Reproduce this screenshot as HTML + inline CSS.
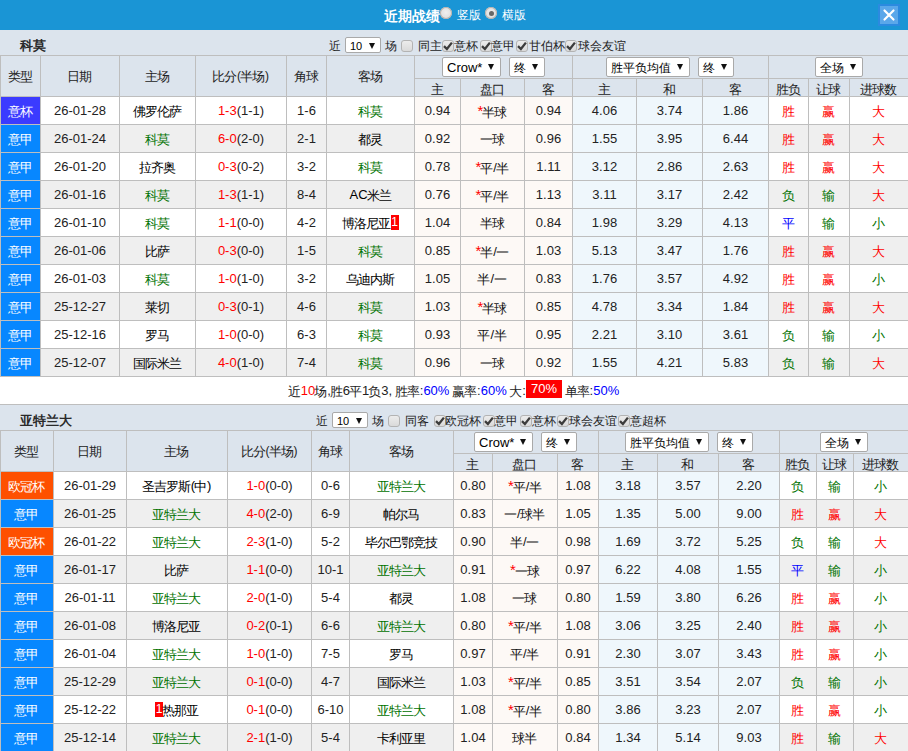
<!DOCTYPE html>
<html><head><meta charset="utf-8"><style>
html,body{margin:0;padding:0;}
body{width:908px;height:751px;overflow:hidden;position:relative;background:#fff;font-family:"Liberation Sans",sans-serif;font-size:12px;color:#222}
body div{position:absolute;}
i{font-style:normal;font-size:13px;letter-spacing:-1px;position:relative;left:-1px;top:1px}
.sel{background:#fff;border:1px solid #a9a9a9;border-radius:2px;box-sizing:border-box;color:#000}
.sel .tri{position:absolute;width:0;height:0;border-left:3px solid transparent;border-right:3px solid transparent;border-top:5px solid #111;}
.badge{display:inline-block;background:#f00;color:#fff;width:8px;height:15px;line-height:15px;text-align:center;font-size:12px;vertical-align:1px}
.ast{color:#f00;font-size:15px;vertical-align:0}
.sl{margin:0 0.5px 0 0}
.big{display:inline-block;background:#f00;color:#fff;padding:0 5px;height:18px;line-height:18px;font-size:13px;vertical-align:2px}
</style></head><body>
<div style="left:0;top:0;width:908px;height:30px;background:#1a95d5"></div>
<div style="left:384px;top:1px;height:30px;line-height:30px;font-size:14px;font-weight:bold;color:#fff;white-space:nowrap">近期战绩</div>
<div style="left:440px;top:7px;width:12px;height:12px;border-radius:50%;background:radial-gradient(circle at 50% 45%,#efefef,#d6d6d6);box-shadow:0 0 0 1px #b9b2ac inset"></div>
<div style="left:457px;top:0;height:31px;line-height:31px;font-size:12px;color:#fff;white-space:nowrap">竖版</div>
<div style="left:485px;top:7px;width:12px;height:12px;border-radius:50%;background:radial-gradient(circle at 50% 45%,#efefef,#d6d6d6);box-shadow:0 0 0 1px #b9b2ac inset"><div style="left:3.5px;top:3.5px;width:5px;height:5px;border-radius:50%;background:#676767"></div></div>
<div style="left:502px;top:0;height:31px;line-height:31px;font-size:12px;color:#fff;white-space:nowrap">横版</div>
<div style="left:878px;top:4px;width:22px;height:22px;box-sizing:border-box;border:2px solid #2b8ae0;background:#5aa7ea">
<svg width="18" height="18" viewBox="0 0 18 18" style="position:absolute;left:0;top:0"><path d="M4.5 4.5 L13.5 13.5 M13.5 4.5 L4.5 13.5" stroke="#fff" stroke-width="2.2" stroke-linecap="round"/></svg></div>
<div style="left:0px;top:30px;width:908px;height:66px;background:#dce4ed"></div>
<div style="left:20px;top:30px;width:80px;height:25px;font-weight:bold;font-size:13px;line-height:32px;color:#2a2a2a">科莫</div>
<div style="left:329px;top:33px;width:60px;height:25px;line-height:27px;white-space:nowrap;color:#222">近</div>
<div class="sel" style="left:345px;top:37px;width:36px;height:16px;font-size:11px"><span style="position:absolute;left:4px;top:0px;line-height:16px;white-space:nowrap">10</span><span class="tri" style="right:5px;top:5px;border-left-width:3px;border-right-width:3px;border-top-width:6px"></span></div>
<div style="left:385px;top:33px;width:60px;height:25px;line-height:27px;white-space:nowrap;color:#222">场</div>
<div style="left:401px;top:40px;width:12px;height:12px;box-sizing:border-box;border:1px solid #b3b3b3;border-radius:3px;background:linear-gradient(#ececec,#dadada);"></div>
<div style="left:418px;top:33px;width:60px;height:25px;line-height:27px;white-space:nowrap;color:#222">同主</div>
<div style="left:442px;top:40px;width:12px;height:12px;box-sizing:border-box;border:1px solid #b3b3b3;border-radius:3px;background:linear-gradient(#ececec,#dadada);"><svg width="12" height="12" viewBox="0 0 12 12" style="position:absolute;left:-1px;top:-1px"><path d="M2 6.2 L4.9 9 L9.9 2.6" stroke="#3c3c3c" stroke-width="2.3" fill="none" stroke-linecap="butt" stroke-linejoin="miter"/></svg></div>
<div style="left:454px;top:33px;width:60px;height:25px;line-height:27px;white-space:nowrap;color:#222">意杯</div>
<div style="left:480px;top:40px;width:12px;height:12px;box-sizing:border-box;border:1px solid #b3b3b3;border-radius:3px;background:linear-gradient(#ececec,#dadada);"><svg width="12" height="12" viewBox="0 0 12 12" style="position:absolute;left:-1px;top:-1px"><path d="M2 6.2 L4.9 9 L9.9 2.6" stroke="#3c3c3c" stroke-width="2.3" fill="none" stroke-linecap="butt" stroke-linejoin="miter"/></svg></div>
<div style="left:491px;top:33px;width:60px;height:25px;line-height:27px;white-space:nowrap;color:#222">意甲</div>
<div style="left:516px;top:40px;width:12px;height:12px;box-sizing:border-box;border:1px solid #b3b3b3;border-radius:3px;background:linear-gradient(#ececec,#dadada);"><svg width="12" height="12" viewBox="0 0 12 12" style="position:absolute;left:-1px;top:-1px"><path d="M2 6.2 L4.9 9 L9.9 2.6" stroke="#3c3c3c" stroke-width="2.3" fill="none" stroke-linecap="butt" stroke-linejoin="miter"/></svg></div>
<div style="left:529px;top:33px;width:60px;height:25px;line-height:27px;white-space:nowrap;color:#222">甘伯杯</div>
<div style="left:565px;top:40px;width:12px;height:12px;box-sizing:border-box;border:1px solid #b3b3b3;border-radius:3px;background:linear-gradient(#ececec,#dadada);"><svg width="12" height="12" viewBox="0 0 12 12" style="position:absolute;left:-1px;top:-1px"><path d="M2 6.2 L4.9 9 L9.9 2.6" stroke="#3c3c3c" stroke-width="2.3" fill="none" stroke-linecap="butt" stroke-linejoin="miter"/></svg></div>
<div style="left:578px;top:33px;width:60px;height:25px;line-height:27px;white-space:nowrap;color:#222">球会友谊</div>
<div style="left:1px;top:56px;width:39px;height:40px;line-height:40px;text-align:center;white-space:nowrap;color:#222"><i>类型</i></div>
<div style="left:41px;top:56px;width:78px;height:40px;line-height:40px;text-align:center;white-space:nowrap;color:#222"><i>日期</i></div>
<div style="left:120px;top:56px;width:75px;height:40px;line-height:40px;text-align:center;white-space:nowrap;color:#222"><i>主场</i></div>
<div style="left:196px;top:56px;width:90px;height:40px;line-height:40px;text-align:center;white-space:nowrap;color:#222"><i>比分</i>(<i>半场</i>)</div>
<div style="left:287px;top:56px;width:39px;height:40px;line-height:40px;text-align:center;white-space:nowrap;color:#222"><i>角球</i></div>
<div style="left:327px;top:56px;width:87px;height:40px;line-height:40px;text-align:center;white-space:nowrap;color:#222"><i>客场</i></div>
<div style="left:415px;top:80px;width:45px;height:17px;line-height:17px;text-align:center;white-space:nowrap;color:#222"><i>主</i></div>
<div style="left:461px;top:80px;width:63px;height:17px;line-height:17px;text-align:center;white-space:nowrap;color:#222"><i>盘口</i></div>
<div style="left:525px;top:80px;width:47px;height:17px;line-height:17px;text-align:center;white-space:nowrap;color:#222"><i>客</i></div>
<div style="left:573px;top:80px;width:63px;height:17px;line-height:17px;text-align:center;white-space:nowrap;color:#222"><i>主</i></div>
<div style="left:637px;top:80px;width:65px;height:17px;line-height:17px;text-align:center;white-space:nowrap;color:#222"><i>和</i></div>
<div style="left:703px;top:80px;width:65px;height:17px;line-height:17px;text-align:center;white-space:nowrap;color:#222"><i>客</i></div>
<div style="left:769px;top:80px;width:39px;height:17px;line-height:17px;text-align:center;white-space:nowrap;color:#222"><i>胜负</i></div>
<div style="left:809px;top:80px;width:40px;height:17px;line-height:17px;text-align:center;white-space:nowrap;color:#222"><i>让球</i></div>
<div style="left:850px;top:80px;width:58px;height:17px;line-height:17px;text-align:center;white-space:nowrap;color:#222"><i>进球数</i></div>
<div class="sel" style="left:442px;top:57px;width:59px;height:20px;font-size:13px"><span style="position:absolute;left:4px;top:0px;line-height:20px;white-space:nowrap">Crow*</span><span class="tri" style="right:6px;top:6px;border-left-width:3px;border-right-width:3px;border-top-width:6px"></span></div>
<div class="sel" style="left:509px;top:57px;width:36px;height:20px;font-size:12px"><span style="position:absolute;left:4px;top:0px;line-height:20px;white-space:nowrap">终</span><span class="tri" style="right:6px;top:6px;border-left-width:3px;border-right-width:3px;border-top-width:6px"></span></div>
<div class="sel" style="left:606px;top:57px;width:84px;height:20px;font-size:12px"><span style="position:absolute;left:4px;top:0px;line-height:20px;white-space:nowrap">胜平负均值</span><span class="tri" style="right:6px;top:6px;border-left-width:3px;border-right-width:3px;border-top-width:6px"></span></div>
<div class="sel" style="left:698px;top:57px;width:36px;height:20px;font-size:12px"><span style="position:absolute;left:4px;top:0px;line-height:20px;white-space:nowrap">终</span><span class="tri" style="right:6px;top:6px;border-left-width:3px;border-right-width:3px;border-top-width:6px"></span></div>
<div class="sel" style="left:815px;top:57px;width:48px;height:20px;font-size:12px"><span style="position:absolute;left:4px;top:0px;line-height:20px;white-space:nowrap">全场</span><span class="tri" style="right:6px;top:6px;border-left-width:3px;border-right-width:3px;border-top-width:6px"></span></div>
<div style="left:0px;top:96px;width:908px;height:28px;background:#fff"></div>
<div style="left:414px;top:96px;width:158px;height:28px;background:#fdf9f6"></div>
<div style="left:572px;top:96px;width:196px;height:28px;background:#eff7fc"></div>
<div style="left:1px;top:97px;width:39px;height:27px;background:#3b3bff"></div>
<div style="left:1px;top:97px;width:39px;height:27px;line-height:27px;text-align:center;white-space:nowrap;font-size:13px;color:#fff"><i>意杯</i></div>
<div style="left:41px;top:97px;width:78px;height:27px;line-height:27px;text-align:center;white-space:nowrap;font-size:13px;color:#222">26-01-28</div>
<div style="left:120px;top:97px;width:75px;height:27px;line-height:27px;text-align:center;white-space:nowrap;font-size:13px;color:#000"><i>佛罗伦萨</i></div>
<div style="left:196px;top:97px;width:90px;height:27px;line-height:27px;text-align:center;white-space:nowrap;font-size:13px;color:#222"><span style="color:#ff0000">1-3</span>(1-1)</div>
<div style="left:287px;top:97px;width:39px;height:27px;line-height:27px;text-align:center;white-space:nowrap;font-size:13px;color:#222">1-6</div>
<div style="left:327px;top:97px;width:87px;height:27px;line-height:27px;text-align:center;white-space:nowrap;font-size:13px;color:#007200"><i>科莫</i></div>
<div style="left:415px;top:97px;width:45px;height:27px;line-height:27px;text-align:center;white-space:nowrap;font-size:13px;color:#222">0.94</div>
<div style="left:461px;top:97px;width:63px;height:27px;line-height:27px;text-align:center;white-space:nowrap;font-size:13px;color:#111"><span class="ast">*</span><i>半球</i></div>
<div style="left:525px;top:97px;width:47px;height:27px;line-height:27px;text-align:center;white-space:nowrap;font-size:13px;color:#222">0.94</div>
<div style="left:573px;top:97px;width:63px;height:27px;line-height:27px;text-align:center;white-space:nowrap;font-size:13px;color:#222">4.06</div>
<div style="left:637px;top:97px;width:65px;height:27px;line-height:27px;text-align:center;white-space:nowrap;font-size:13px;color:#222">3.74</div>
<div style="left:703px;top:97px;width:65px;height:27px;line-height:27px;text-align:center;white-space:nowrap;font-size:13px;color:#222">1.86</div>
<div style="left:769px;top:97px;width:39px;height:27px;line-height:27px;text-align:center;white-space:nowrap;font-size:13px;color:#ff0000"><i>胜</i></div>
<div style="left:809px;top:97px;width:40px;height:27px;line-height:27px;text-align:center;white-space:nowrap;font-size:13px;color:#ff0000"><i>赢</i></div>
<div style="left:850px;top:97px;width:58px;height:27px;line-height:27px;text-align:center;white-space:nowrap;font-size:13px;color:#ff0000"><i>大</i></div>
<div style="left:0px;top:124px;width:908px;height:28px;background:#efefef"></div>
<div style="left:414px;top:124px;width:158px;height:28px;background:#fdf9f6"></div>
<div style="left:572px;top:124px;width:196px;height:28px;background:#eff7fc"></div>
<div style="left:1px;top:125px;width:39px;height:27px;background:#0787ff"></div>
<div style="left:1px;top:125px;width:39px;height:27px;line-height:27px;text-align:center;white-space:nowrap;font-size:13px;color:#fff"><i>意甲</i></div>
<div style="left:41px;top:125px;width:78px;height:27px;line-height:27px;text-align:center;white-space:nowrap;font-size:13px;color:#222">26-01-24</div>
<div style="left:120px;top:125px;width:75px;height:27px;line-height:27px;text-align:center;white-space:nowrap;font-size:13px;color:#007200"><i>科莫</i></div>
<div style="left:196px;top:125px;width:90px;height:27px;line-height:27px;text-align:center;white-space:nowrap;font-size:13px;color:#222"><span style="color:#ff0000">6-0</span>(2-0)</div>
<div style="left:287px;top:125px;width:39px;height:27px;line-height:27px;text-align:center;white-space:nowrap;font-size:13px;color:#222">2-1</div>
<div style="left:327px;top:125px;width:87px;height:27px;line-height:27px;text-align:center;white-space:nowrap;font-size:13px;color:#000"><i>都灵</i></div>
<div style="left:415px;top:125px;width:45px;height:27px;line-height:27px;text-align:center;white-space:nowrap;font-size:13px;color:#222">0.92</div>
<div style="left:461px;top:125px;width:63px;height:27px;line-height:27px;text-align:center;white-space:nowrap;font-size:13px;color:#111"><i>一球</i></div>
<div style="left:525px;top:125px;width:47px;height:27px;line-height:27px;text-align:center;white-space:nowrap;font-size:13px;color:#222">0.96</div>
<div style="left:573px;top:125px;width:63px;height:27px;line-height:27px;text-align:center;white-space:nowrap;font-size:13px;color:#222">1.55</div>
<div style="left:637px;top:125px;width:65px;height:27px;line-height:27px;text-align:center;white-space:nowrap;font-size:13px;color:#222">3.95</div>
<div style="left:703px;top:125px;width:65px;height:27px;line-height:27px;text-align:center;white-space:nowrap;font-size:13px;color:#222">6.44</div>
<div style="left:769px;top:125px;width:39px;height:27px;line-height:27px;text-align:center;white-space:nowrap;font-size:13px;color:#ff0000"><i>胜</i></div>
<div style="left:809px;top:125px;width:40px;height:27px;line-height:27px;text-align:center;white-space:nowrap;font-size:13px;color:#ff0000"><i>赢</i></div>
<div style="left:850px;top:125px;width:58px;height:27px;line-height:27px;text-align:center;white-space:nowrap;font-size:13px;color:#ff0000"><i>大</i></div>
<div style="left:0px;top:152px;width:908px;height:28px;background:#fff"></div>
<div style="left:414px;top:152px;width:158px;height:28px;background:#fdf9f6"></div>
<div style="left:572px;top:152px;width:196px;height:28px;background:#eff7fc"></div>
<div style="left:1px;top:153px;width:39px;height:27px;background:#0787ff"></div>
<div style="left:1px;top:153px;width:39px;height:27px;line-height:27px;text-align:center;white-space:nowrap;font-size:13px;color:#fff"><i>意甲</i></div>
<div style="left:41px;top:153px;width:78px;height:27px;line-height:27px;text-align:center;white-space:nowrap;font-size:13px;color:#222">26-01-20</div>
<div style="left:120px;top:153px;width:75px;height:27px;line-height:27px;text-align:center;white-space:nowrap;font-size:13px;color:#000"><i>拉齐奥</i></div>
<div style="left:196px;top:153px;width:90px;height:27px;line-height:27px;text-align:center;white-space:nowrap;font-size:13px;color:#222"><span style="color:#ff0000">0-3</span>(0-2)</div>
<div style="left:287px;top:153px;width:39px;height:27px;line-height:27px;text-align:center;white-space:nowrap;font-size:13px;color:#222">3-2</div>
<div style="left:327px;top:153px;width:87px;height:27px;line-height:27px;text-align:center;white-space:nowrap;font-size:13px;color:#007200"><i>科莫</i></div>
<div style="left:415px;top:153px;width:45px;height:27px;line-height:27px;text-align:center;white-space:nowrap;font-size:13px;color:#222">0.78</div>
<div style="left:461px;top:153px;width:63px;height:27px;line-height:27px;text-align:center;white-space:nowrap;font-size:13px;color:#111"><span class="ast">*</span><i>平</i><span class="sl">/</span><i>半</i></div>
<div style="left:525px;top:153px;width:47px;height:27px;line-height:27px;text-align:center;white-space:nowrap;font-size:13px;color:#222">1.11</div>
<div style="left:573px;top:153px;width:63px;height:27px;line-height:27px;text-align:center;white-space:nowrap;font-size:13px;color:#222">3.12</div>
<div style="left:637px;top:153px;width:65px;height:27px;line-height:27px;text-align:center;white-space:nowrap;font-size:13px;color:#222">2.86</div>
<div style="left:703px;top:153px;width:65px;height:27px;line-height:27px;text-align:center;white-space:nowrap;font-size:13px;color:#222">2.63</div>
<div style="left:769px;top:153px;width:39px;height:27px;line-height:27px;text-align:center;white-space:nowrap;font-size:13px;color:#ff0000"><i>胜</i></div>
<div style="left:809px;top:153px;width:40px;height:27px;line-height:27px;text-align:center;white-space:nowrap;font-size:13px;color:#ff0000"><i>赢</i></div>
<div style="left:850px;top:153px;width:58px;height:27px;line-height:27px;text-align:center;white-space:nowrap;font-size:13px;color:#ff0000"><i>大</i></div>
<div style="left:0px;top:180px;width:908px;height:28px;background:#efefef"></div>
<div style="left:414px;top:180px;width:158px;height:28px;background:#fdf9f6"></div>
<div style="left:572px;top:180px;width:196px;height:28px;background:#eff7fc"></div>
<div style="left:1px;top:181px;width:39px;height:27px;background:#0787ff"></div>
<div style="left:1px;top:181px;width:39px;height:27px;line-height:27px;text-align:center;white-space:nowrap;font-size:13px;color:#fff"><i>意甲</i></div>
<div style="left:41px;top:181px;width:78px;height:27px;line-height:27px;text-align:center;white-space:nowrap;font-size:13px;color:#222">26-01-16</div>
<div style="left:120px;top:181px;width:75px;height:27px;line-height:27px;text-align:center;white-space:nowrap;font-size:13px;color:#007200"><i>科莫</i></div>
<div style="left:196px;top:181px;width:90px;height:27px;line-height:27px;text-align:center;white-space:nowrap;font-size:13px;color:#222"><span style="color:#ff0000">1-3</span>(1-1)</div>
<div style="left:287px;top:181px;width:39px;height:27px;line-height:27px;text-align:center;white-space:nowrap;font-size:13px;color:#222">8-4</div>
<div style="left:327px;top:181px;width:87px;height:27px;line-height:27px;text-align:center;white-space:nowrap;font-size:13px;color:#000">AC<i>米兰</i></div>
<div style="left:415px;top:181px;width:45px;height:27px;line-height:27px;text-align:center;white-space:nowrap;font-size:13px;color:#222">0.76</div>
<div style="left:461px;top:181px;width:63px;height:27px;line-height:27px;text-align:center;white-space:nowrap;font-size:13px;color:#111"><span class="ast">*</span><i>平</i><span class="sl">/</span><i>半</i></div>
<div style="left:525px;top:181px;width:47px;height:27px;line-height:27px;text-align:center;white-space:nowrap;font-size:13px;color:#222">1.13</div>
<div style="left:573px;top:181px;width:63px;height:27px;line-height:27px;text-align:center;white-space:nowrap;font-size:13px;color:#222">3.11</div>
<div style="left:637px;top:181px;width:65px;height:27px;line-height:27px;text-align:center;white-space:nowrap;font-size:13px;color:#222">3.17</div>
<div style="left:703px;top:181px;width:65px;height:27px;line-height:27px;text-align:center;white-space:nowrap;font-size:13px;color:#222">2.42</div>
<div style="left:769px;top:181px;width:39px;height:27px;line-height:27px;text-align:center;white-space:nowrap;font-size:13px;color:#007200"><i>负</i></div>
<div style="left:809px;top:181px;width:40px;height:27px;line-height:27px;text-align:center;white-space:nowrap;font-size:13px;color:#007200"><i>输</i></div>
<div style="left:850px;top:181px;width:58px;height:27px;line-height:27px;text-align:center;white-space:nowrap;font-size:13px;color:#ff0000"><i>大</i></div>
<div style="left:0px;top:208px;width:908px;height:28px;background:#fff"></div>
<div style="left:414px;top:208px;width:158px;height:28px;background:#fdf9f6"></div>
<div style="left:572px;top:208px;width:196px;height:28px;background:#eff7fc"></div>
<div style="left:1px;top:209px;width:39px;height:27px;background:#0787ff"></div>
<div style="left:1px;top:209px;width:39px;height:27px;line-height:27px;text-align:center;white-space:nowrap;font-size:13px;color:#fff"><i>意甲</i></div>
<div style="left:41px;top:209px;width:78px;height:27px;line-height:27px;text-align:center;white-space:nowrap;font-size:13px;color:#222">26-01-10</div>
<div style="left:120px;top:209px;width:75px;height:27px;line-height:27px;text-align:center;white-space:nowrap;font-size:13px;color:#007200"><i>科莫</i></div>
<div style="left:196px;top:209px;width:90px;height:27px;line-height:27px;text-align:center;white-space:nowrap;font-size:13px;color:#222"><span style="color:#ff0000">1-1</span>(0-0)</div>
<div style="left:287px;top:209px;width:39px;height:27px;line-height:27px;text-align:center;white-space:nowrap;font-size:13px;color:#222">4-2</div>
<div style="left:327px;top:209px;width:87px;height:27px;line-height:27px;text-align:center;white-space:nowrap;font-size:13px;color:#000"><i>博洛尼亚</i><span class="badge">1</span></div>
<div style="left:415px;top:209px;width:45px;height:27px;line-height:27px;text-align:center;white-space:nowrap;font-size:13px;color:#222">1.04</div>
<div style="left:461px;top:209px;width:63px;height:27px;line-height:27px;text-align:center;white-space:nowrap;font-size:13px;color:#111"><i>半球</i></div>
<div style="left:525px;top:209px;width:47px;height:27px;line-height:27px;text-align:center;white-space:nowrap;font-size:13px;color:#222">0.84</div>
<div style="left:573px;top:209px;width:63px;height:27px;line-height:27px;text-align:center;white-space:nowrap;font-size:13px;color:#222">1.98</div>
<div style="left:637px;top:209px;width:65px;height:27px;line-height:27px;text-align:center;white-space:nowrap;font-size:13px;color:#222">3.29</div>
<div style="left:703px;top:209px;width:65px;height:27px;line-height:27px;text-align:center;white-space:nowrap;font-size:13px;color:#222">4.13</div>
<div style="left:769px;top:209px;width:39px;height:27px;line-height:27px;text-align:center;white-space:nowrap;font-size:13px;color:#0000ff"><i>平</i></div>
<div style="left:809px;top:209px;width:40px;height:27px;line-height:27px;text-align:center;white-space:nowrap;font-size:13px;color:#007200"><i>输</i></div>
<div style="left:850px;top:209px;width:58px;height:27px;line-height:27px;text-align:center;white-space:nowrap;font-size:13px;color:#007200"><i>小</i></div>
<div style="left:0px;top:236px;width:908px;height:28px;background:#efefef"></div>
<div style="left:414px;top:236px;width:158px;height:28px;background:#fdf9f6"></div>
<div style="left:572px;top:236px;width:196px;height:28px;background:#eff7fc"></div>
<div style="left:1px;top:237px;width:39px;height:27px;background:#0787ff"></div>
<div style="left:1px;top:237px;width:39px;height:27px;line-height:27px;text-align:center;white-space:nowrap;font-size:13px;color:#fff"><i>意甲</i></div>
<div style="left:41px;top:237px;width:78px;height:27px;line-height:27px;text-align:center;white-space:nowrap;font-size:13px;color:#222">26-01-06</div>
<div style="left:120px;top:237px;width:75px;height:27px;line-height:27px;text-align:center;white-space:nowrap;font-size:13px;color:#000"><i>比萨</i></div>
<div style="left:196px;top:237px;width:90px;height:27px;line-height:27px;text-align:center;white-space:nowrap;font-size:13px;color:#222"><span style="color:#ff0000">0-3</span>(0-0)</div>
<div style="left:287px;top:237px;width:39px;height:27px;line-height:27px;text-align:center;white-space:nowrap;font-size:13px;color:#222">1-5</div>
<div style="left:327px;top:237px;width:87px;height:27px;line-height:27px;text-align:center;white-space:nowrap;font-size:13px;color:#007200"><i>科莫</i></div>
<div style="left:415px;top:237px;width:45px;height:27px;line-height:27px;text-align:center;white-space:nowrap;font-size:13px;color:#222">0.85</div>
<div style="left:461px;top:237px;width:63px;height:27px;line-height:27px;text-align:center;white-space:nowrap;font-size:13px;color:#111"><span class="ast">*</span><i>半</i><span class="sl">/</span><i>一</i></div>
<div style="left:525px;top:237px;width:47px;height:27px;line-height:27px;text-align:center;white-space:nowrap;font-size:13px;color:#222">1.03</div>
<div style="left:573px;top:237px;width:63px;height:27px;line-height:27px;text-align:center;white-space:nowrap;font-size:13px;color:#222">5.13</div>
<div style="left:637px;top:237px;width:65px;height:27px;line-height:27px;text-align:center;white-space:nowrap;font-size:13px;color:#222">3.47</div>
<div style="left:703px;top:237px;width:65px;height:27px;line-height:27px;text-align:center;white-space:nowrap;font-size:13px;color:#222">1.76</div>
<div style="left:769px;top:237px;width:39px;height:27px;line-height:27px;text-align:center;white-space:nowrap;font-size:13px;color:#ff0000"><i>胜</i></div>
<div style="left:809px;top:237px;width:40px;height:27px;line-height:27px;text-align:center;white-space:nowrap;font-size:13px;color:#ff0000"><i>赢</i></div>
<div style="left:850px;top:237px;width:58px;height:27px;line-height:27px;text-align:center;white-space:nowrap;font-size:13px;color:#ff0000"><i>大</i></div>
<div style="left:0px;top:264px;width:908px;height:28px;background:#fff"></div>
<div style="left:414px;top:264px;width:158px;height:28px;background:#fdf9f6"></div>
<div style="left:572px;top:264px;width:196px;height:28px;background:#eff7fc"></div>
<div style="left:1px;top:265px;width:39px;height:27px;background:#0787ff"></div>
<div style="left:1px;top:265px;width:39px;height:27px;line-height:27px;text-align:center;white-space:nowrap;font-size:13px;color:#fff"><i>意甲</i></div>
<div style="left:41px;top:265px;width:78px;height:27px;line-height:27px;text-align:center;white-space:nowrap;font-size:13px;color:#222">26-01-03</div>
<div style="left:120px;top:265px;width:75px;height:27px;line-height:27px;text-align:center;white-space:nowrap;font-size:13px;color:#007200"><i>科莫</i></div>
<div style="left:196px;top:265px;width:90px;height:27px;line-height:27px;text-align:center;white-space:nowrap;font-size:13px;color:#222"><span style="color:#ff0000">1-0</span>(1-0)</div>
<div style="left:287px;top:265px;width:39px;height:27px;line-height:27px;text-align:center;white-space:nowrap;font-size:13px;color:#222">3-2</div>
<div style="left:327px;top:265px;width:87px;height:27px;line-height:27px;text-align:center;white-space:nowrap;font-size:13px;color:#000"><i>乌迪内斯</i></div>
<div style="left:415px;top:265px;width:45px;height:27px;line-height:27px;text-align:center;white-space:nowrap;font-size:13px;color:#222">1.05</div>
<div style="left:461px;top:265px;width:63px;height:27px;line-height:27px;text-align:center;white-space:nowrap;font-size:13px;color:#111"><i>半</i><span class="sl">/</span><i>一</i></div>
<div style="left:525px;top:265px;width:47px;height:27px;line-height:27px;text-align:center;white-space:nowrap;font-size:13px;color:#222">0.83</div>
<div style="left:573px;top:265px;width:63px;height:27px;line-height:27px;text-align:center;white-space:nowrap;font-size:13px;color:#222">1.76</div>
<div style="left:637px;top:265px;width:65px;height:27px;line-height:27px;text-align:center;white-space:nowrap;font-size:13px;color:#222">3.57</div>
<div style="left:703px;top:265px;width:65px;height:27px;line-height:27px;text-align:center;white-space:nowrap;font-size:13px;color:#222">4.92</div>
<div style="left:769px;top:265px;width:39px;height:27px;line-height:27px;text-align:center;white-space:nowrap;font-size:13px;color:#ff0000"><i>胜</i></div>
<div style="left:809px;top:265px;width:40px;height:27px;line-height:27px;text-align:center;white-space:nowrap;font-size:13px;color:#ff0000"><i>赢</i></div>
<div style="left:850px;top:265px;width:58px;height:27px;line-height:27px;text-align:center;white-space:nowrap;font-size:13px;color:#007200"><i>小</i></div>
<div style="left:0px;top:292px;width:908px;height:28px;background:#efefef"></div>
<div style="left:414px;top:292px;width:158px;height:28px;background:#fdf9f6"></div>
<div style="left:572px;top:292px;width:196px;height:28px;background:#eff7fc"></div>
<div style="left:1px;top:293px;width:39px;height:27px;background:#0787ff"></div>
<div style="left:1px;top:293px;width:39px;height:27px;line-height:27px;text-align:center;white-space:nowrap;font-size:13px;color:#fff"><i>意甲</i></div>
<div style="left:41px;top:293px;width:78px;height:27px;line-height:27px;text-align:center;white-space:nowrap;font-size:13px;color:#222">25-12-27</div>
<div style="left:120px;top:293px;width:75px;height:27px;line-height:27px;text-align:center;white-space:nowrap;font-size:13px;color:#000"><i>莱切</i></div>
<div style="left:196px;top:293px;width:90px;height:27px;line-height:27px;text-align:center;white-space:nowrap;font-size:13px;color:#222"><span style="color:#ff0000">0-3</span>(0-1)</div>
<div style="left:287px;top:293px;width:39px;height:27px;line-height:27px;text-align:center;white-space:nowrap;font-size:13px;color:#222">4-6</div>
<div style="left:327px;top:293px;width:87px;height:27px;line-height:27px;text-align:center;white-space:nowrap;font-size:13px;color:#007200"><i>科莫</i></div>
<div style="left:415px;top:293px;width:45px;height:27px;line-height:27px;text-align:center;white-space:nowrap;font-size:13px;color:#222">1.03</div>
<div style="left:461px;top:293px;width:63px;height:27px;line-height:27px;text-align:center;white-space:nowrap;font-size:13px;color:#111"><span class="ast">*</span><i>半球</i></div>
<div style="left:525px;top:293px;width:47px;height:27px;line-height:27px;text-align:center;white-space:nowrap;font-size:13px;color:#222">0.85</div>
<div style="left:573px;top:293px;width:63px;height:27px;line-height:27px;text-align:center;white-space:nowrap;font-size:13px;color:#222">4.78</div>
<div style="left:637px;top:293px;width:65px;height:27px;line-height:27px;text-align:center;white-space:nowrap;font-size:13px;color:#222">3.34</div>
<div style="left:703px;top:293px;width:65px;height:27px;line-height:27px;text-align:center;white-space:nowrap;font-size:13px;color:#222">1.84</div>
<div style="left:769px;top:293px;width:39px;height:27px;line-height:27px;text-align:center;white-space:nowrap;font-size:13px;color:#ff0000"><i>胜</i></div>
<div style="left:809px;top:293px;width:40px;height:27px;line-height:27px;text-align:center;white-space:nowrap;font-size:13px;color:#ff0000"><i>赢</i></div>
<div style="left:850px;top:293px;width:58px;height:27px;line-height:27px;text-align:center;white-space:nowrap;font-size:13px;color:#ff0000"><i>大</i></div>
<div style="left:0px;top:320px;width:908px;height:28px;background:#fff"></div>
<div style="left:414px;top:320px;width:158px;height:28px;background:#fdf9f6"></div>
<div style="left:572px;top:320px;width:196px;height:28px;background:#eff7fc"></div>
<div style="left:1px;top:321px;width:39px;height:27px;background:#0787ff"></div>
<div style="left:1px;top:321px;width:39px;height:27px;line-height:27px;text-align:center;white-space:nowrap;font-size:13px;color:#fff"><i>意甲</i></div>
<div style="left:41px;top:321px;width:78px;height:27px;line-height:27px;text-align:center;white-space:nowrap;font-size:13px;color:#222">25-12-16</div>
<div style="left:120px;top:321px;width:75px;height:27px;line-height:27px;text-align:center;white-space:nowrap;font-size:13px;color:#000"><i>罗马</i></div>
<div style="left:196px;top:321px;width:90px;height:27px;line-height:27px;text-align:center;white-space:nowrap;font-size:13px;color:#222"><span style="color:#ff0000">1-0</span>(0-0)</div>
<div style="left:287px;top:321px;width:39px;height:27px;line-height:27px;text-align:center;white-space:nowrap;font-size:13px;color:#222">6-3</div>
<div style="left:327px;top:321px;width:87px;height:27px;line-height:27px;text-align:center;white-space:nowrap;font-size:13px;color:#007200"><i>科莫</i></div>
<div style="left:415px;top:321px;width:45px;height:27px;line-height:27px;text-align:center;white-space:nowrap;font-size:13px;color:#222">0.93</div>
<div style="left:461px;top:321px;width:63px;height:27px;line-height:27px;text-align:center;white-space:nowrap;font-size:13px;color:#111"><i>平</i><span class="sl">/</span><i>半</i></div>
<div style="left:525px;top:321px;width:47px;height:27px;line-height:27px;text-align:center;white-space:nowrap;font-size:13px;color:#222">0.95</div>
<div style="left:573px;top:321px;width:63px;height:27px;line-height:27px;text-align:center;white-space:nowrap;font-size:13px;color:#222">2.21</div>
<div style="left:637px;top:321px;width:65px;height:27px;line-height:27px;text-align:center;white-space:nowrap;font-size:13px;color:#222">3.10</div>
<div style="left:703px;top:321px;width:65px;height:27px;line-height:27px;text-align:center;white-space:nowrap;font-size:13px;color:#222">3.61</div>
<div style="left:769px;top:321px;width:39px;height:27px;line-height:27px;text-align:center;white-space:nowrap;font-size:13px;color:#007200"><i>负</i></div>
<div style="left:809px;top:321px;width:40px;height:27px;line-height:27px;text-align:center;white-space:nowrap;font-size:13px;color:#007200"><i>输</i></div>
<div style="left:850px;top:321px;width:58px;height:27px;line-height:27px;text-align:center;white-space:nowrap;font-size:13px;color:#007200"><i>小</i></div>
<div style="left:0px;top:348px;width:908px;height:28px;background:#efefef"></div>
<div style="left:414px;top:348px;width:158px;height:28px;background:#fdf9f6"></div>
<div style="left:572px;top:348px;width:196px;height:28px;background:#eff7fc"></div>
<div style="left:1px;top:349px;width:39px;height:27px;background:#0787ff"></div>
<div style="left:1px;top:349px;width:39px;height:27px;line-height:27px;text-align:center;white-space:nowrap;font-size:13px;color:#fff"><i>意甲</i></div>
<div style="left:41px;top:349px;width:78px;height:27px;line-height:27px;text-align:center;white-space:nowrap;font-size:13px;color:#222">25-12-07</div>
<div style="left:120px;top:349px;width:75px;height:27px;line-height:27px;text-align:center;white-space:nowrap;font-size:13px;color:#000"><i>国际米兰</i></div>
<div style="left:196px;top:349px;width:90px;height:27px;line-height:27px;text-align:center;white-space:nowrap;font-size:13px;color:#222"><span style="color:#ff0000">4-0</span>(1-0)</div>
<div style="left:287px;top:349px;width:39px;height:27px;line-height:27px;text-align:center;white-space:nowrap;font-size:13px;color:#222">7-4</div>
<div style="left:327px;top:349px;width:87px;height:27px;line-height:27px;text-align:center;white-space:nowrap;font-size:13px;color:#007200"><i>科莫</i></div>
<div style="left:415px;top:349px;width:45px;height:27px;line-height:27px;text-align:center;white-space:nowrap;font-size:13px;color:#222">0.96</div>
<div style="left:461px;top:349px;width:63px;height:27px;line-height:27px;text-align:center;white-space:nowrap;font-size:13px;color:#111"><i>一球</i></div>
<div style="left:525px;top:349px;width:47px;height:27px;line-height:27px;text-align:center;white-space:nowrap;font-size:13px;color:#222">0.92</div>
<div style="left:573px;top:349px;width:63px;height:27px;line-height:27px;text-align:center;white-space:nowrap;font-size:13px;color:#222">1.55</div>
<div style="left:637px;top:349px;width:65px;height:27px;line-height:27px;text-align:center;white-space:nowrap;font-size:13px;color:#222">4.21</div>
<div style="left:703px;top:349px;width:65px;height:27px;line-height:27px;text-align:center;white-space:nowrap;font-size:13px;color:#222">5.83</div>
<div style="left:769px;top:349px;width:39px;height:27px;line-height:27px;text-align:center;white-space:nowrap;font-size:13px;color:#007200"><i>负</i></div>
<div style="left:809px;top:349px;width:40px;height:27px;line-height:27px;text-align:center;white-space:nowrap;font-size:13px;color:#007200"><i>输</i></div>
<div style="left:850px;top:349px;width:58px;height:27px;line-height:27px;text-align:center;white-space:nowrap;font-size:13px;color:#ff0000"><i>大</i></div>
<div style="left:0px;top:376px;width:908px;height:28px;background:#fff"></div>
<div style="left:0px;top:377px;width:908px;height:27px;line-height:27px;text-align:center;white-space:nowrap;font-size:13px;color:#222"><i>近</i><span style="color:#f00">10</span><i>场</i>,<i>胜</i>6<i>平</i>1<i>负</i>3, <i>胜率</i>:<span style="color:#00f">60%</span> <i>赢率</i>:<span style="color:#00f">60%</span> <i>大</i>:<span class="big">70%</span> <i>单率</i>:<span style="color:#00f">50%</span></div>
<div style="left:0px;top:55px;width:908px;height:1px;background:#bebebe"></div>
<div style="left:414px;top:78px;width:494px;height:1px;background:#bebebe"></div>
<div style="left:0px;top:96px;width:908px;height:1px;background:#bebebe"></div>
<div style="left:0px;top:124px;width:908px;height:1px;background:#bebebe"></div>
<div style="left:0px;top:152px;width:908px;height:1px;background:#bebebe"></div>
<div style="left:0px;top:180px;width:908px;height:1px;background:#bebebe"></div>
<div style="left:0px;top:208px;width:908px;height:1px;background:#bebebe"></div>
<div style="left:0px;top:236px;width:908px;height:1px;background:#bebebe"></div>
<div style="left:0px;top:264px;width:908px;height:1px;background:#bebebe"></div>
<div style="left:0px;top:292px;width:908px;height:1px;background:#bebebe"></div>
<div style="left:0px;top:320px;width:908px;height:1px;background:#bebebe"></div>
<div style="left:0px;top:348px;width:908px;height:1px;background:#bebebe"></div>
<div style="left:0px;top:376px;width:908px;height:1px;background:#bebebe"></div>
<div style="left:0px;top:404px;width:908px;height:1px;background:#bebebe"></div>
<div style="left:0px;top:55px;width:1px;height:321px;background:#bebebe"></div>
<div style="left:40px;top:55px;width:1px;height:321px;background:#bebebe"></div>
<div style="left:119px;top:55px;width:1px;height:321px;background:#bebebe"></div>
<div style="left:195px;top:55px;width:1px;height:321px;background:#bebebe"></div>
<div style="left:286px;top:55px;width:1px;height:321px;background:#bebebe"></div>
<div style="left:326px;top:55px;width:1px;height:321px;background:#bebebe"></div>
<div style="left:414px;top:55px;width:1px;height:321px;background:#bebebe"></div>
<div style="left:460px;top:78px;width:1px;height:298px;background:#bebebe"></div>
<div style="left:524px;top:78px;width:1px;height:298px;background:#bebebe"></div>
<div style="left:572px;top:55px;width:1px;height:321px;background:#bebebe"></div>
<div style="left:636px;top:78px;width:1px;height:298px;background:#bebebe"></div>
<div style="left:702px;top:78px;width:1px;height:298px;background:#bebebe"></div>
<div style="left:768px;top:55px;width:1px;height:321px;background:#bebebe"></div>
<div style="left:808px;top:78px;width:1px;height:298px;background:#bebebe"></div>
<div style="left:849px;top:78px;width:1px;height:298px;background:#bebebe"></div>
<div style="left:0px;top:405px;width:908px;height:66px;background:#dce4ed"></div>
<div style="left:20px;top:405px;width:80px;height:25px;font-weight:bold;font-size:13px;line-height:32px;color:#2a2a2a">亚特兰大</div>
<div style="left:316px;top:408px;width:60px;height:25px;line-height:27px;white-space:nowrap;color:#222">近</div>
<div class="sel" style="left:332px;top:412px;width:36px;height:16px;font-size:11px"><span style="position:absolute;left:4px;top:0px;line-height:16px;white-space:nowrap">10</span><span class="tri" style="right:5px;top:5px;border-left-width:3px;border-right-width:3px;border-top-width:6px"></span></div>
<div style="left:372px;top:408px;width:60px;height:25px;line-height:27px;white-space:nowrap;color:#222">场</div>
<div style="left:388px;top:415px;width:12px;height:12px;box-sizing:border-box;border:1px solid #b3b3b3;border-radius:3px;background:linear-gradient(#ececec,#dadada);"></div>
<div style="left:405px;top:408px;width:60px;height:25px;line-height:27px;white-space:nowrap;color:#222">同客</div>
<div style="left:434px;top:415px;width:12px;height:12px;box-sizing:border-box;border:1px solid #b3b3b3;border-radius:3px;background:linear-gradient(#ececec,#dadada);"><svg width="12" height="12" viewBox="0 0 12 12" style="position:absolute;left:-1px;top:-1px"><path d="M2 6.2 L4.9 9 L9.9 2.6" stroke="#3c3c3c" stroke-width="2.3" fill="none" stroke-linecap="butt" stroke-linejoin="miter"/></svg></div>
<div style="left:445px;top:408px;width:60px;height:25px;line-height:27px;white-space:nowrap;color:#222">欧冠杯</div>
<div style="left:483px;top:415px;width:12px;height:12px;box-sizing:border-box;border:1px solid #b3b3b3;border-radius:3px;background:linear-gradient(#ececec,#dadada);"><svg width="12" height="12" viewBox="0 0 12 12" style="position:absolute;left:-1px;top:-1px"><path d="M2 6.2 L4.9 9 L9.9 2.6" stroke="#3c3c3c" stroke-width="2.3" fill="none" stroke-linecap="butt" stroke-linejoin="miter"/></svg></div>
<div style="left:494px;top:408px;width:60px;height:25px;line-height:27px;white-space:nowrap;color:#222">意甲</div>
<div style="left:520px;top:415px;width:12px;height:12px;box-sizing:border-box;border:1px solid #b3b3b3;border-radius:3px;background:linear-gradient(#ececec,#dadada);"><svg width="12" height="12" viewBox="0 0 12 12" style="position:absolute;left:-1px;top:-1px"><path d="M2 6.2 L4.9 9 L9.9 2.6" stroke="#3c3c3c" stroke-width="2.3" fill="none" stroke-linecap="butt" stroke-linejoin="miter"/></svg></div>
<div style="left:532px;top:408px;width:60px;height:25px;line-height:27px;white-space:nowrap;color:#222">意杯</div>
<div style="left:557px;top:415px;width:12px;height:12px;box-sizing:border-box;border:1px solid #b3b3b3;border-radius:3px;background:linear-gradient(#ececec,#dadada);"><svg width="12" height="12" viewBox="0 0 12 12" style="position:absolute;left:-1px;top:-1px"><path d="M2 6.2 L4.9 9 L9.9 2.6" stroke="#3c3c3c" stroke-width="2.3" fill="none" stroke-linecap="butt" stroke-linejoin="miter"/></svg></div>
<div style="left:569px;top:408px;width:60px;height:25px;line-height:27px;white-space:nowrap;color:#222">球会友谊</div>
<div style="left:618px;top:415px;width:12px;height:12px;box-sizing:border-box;border:1px solid #b3b3b3;border-radius:3px;background:linear-gradient(#ececec,#dadada);"><svg width="12" height="12" viewBox="0 0 12 12" style="position:absolute;left:-1px;top:-1px"><path d="M2 6.2 L4.9 9 L9.9 2.6" stroke="#3c3c3c" stroke-width="2.3" fill="none" stroke-linecap="butt" stroke-linejoin="miter"/></svg></div>
<div style="left:630px;top:408px;width:60px;height:25px;line-height:27px;white-space:nowrap;color:#222">意超杯</div>
<div style="left:1px;top:431px;width:52px;height:40px;line-height:40px;text-align:center;white-space:nowrap;color:#222"><i>类型</i></div>
<div style="left:54px;top:431px;width:72px;height:40px;line-height:40px;text-align:center;white-space:nowrap;color:#222"><i>日期</i></div>
<div style="left:127px;top:431px;width:100px;height:40px;line-height:40px;text-align:center;white-space:nowrap;color:#222"><i>主场</i></div>
<div style="left:228px;top:431px;width:83px;height:40px;line-height:40px;text-align:center;white-space:nowrap;color:#222"><i>比分</i>(<i>半场</i>)</div>
<div style="left:312px;top:431px;width:37px;height:40px;line-height:40px;text-align:center;white-space:nowrap;color:#222"><i>角球</i></div>
<div style="left:350px;top:431px;width:103px;height:40px;line-height:40px;text-align:center;white-space:nowrap;color:#222"><i>客场</i></div>
<div style="left:454px;top:455px;width:38px;height:17px;line-height:17px;text-align:center;white-space:nowrap;color:#222"><i>主</i></div>
<div style="left:493px;top:455px;width:64px;height:17px;line-height:17px;text-align:center;white-space:nowrap;color:#222"><i>盘口</i></div>
<div style="left:558px;top:455px;width:40px;height:17px;line-height:17px;text-align:center;white-space:nowrap;color:#222"><i>客</i></div>
<div style="left:599px;top:455px;width:58px;height:17px;line-height:17px;text-align:center;white-space:nowrap;color:#222"><i>主</i></div>
<div style="left:658px;top:455px;width:60px;height:17px;line-height:17px;text-align:center;white-space:nowrap;color:#222"><i>和</i></div>
<div style="left:719px;top:455px;width:60px;height:17px;line-height:17px;text-align:center;white-space:nowrap;color:#222"><i>客</i></div>
<div style="left:780px;top:455px;width:36px;height:17px;line-height:17px;text-align:center;white-space:nowrap;color:#222"><i>胜负</i></div>
<div style="left:817px;top:455px;width:36px;height:17px;line-height:17px;text-align:center;white-space:nowrap;color:#222"><i>让球</i></div>
<div style="left:854px;top:455px;width:54px;height:17px;line-height:17px;text-align:center;white-space:nowrap;color:#222"><i>进球数</i></div>
<div class="sel" style="left:474px;top:432px;width:59px;height:20px;font-size:13px"><span style="position:absolute;left:4px;top:0px;line-height:20px;white-space:nowrap">Crow*</span><span class="tri" style="right:6px;top:6px;border-left-width:3px;border-right-width:3px;border-top-width:6px"></span></div>
<div class="sel" style="left:541px;top:432px;width:36px;height:20px;font-size:12px"><span style="position:absolute;left:4px;top:0px;line-height:20px;white-space:nowrap">终</span><span class="tri" style="right:6px;top:6px;border-left-width:3px;border-right-width:3px;border-top-width:6px"></span></div>
<div class="sel" style="left:625px;top:432px;width:84px;height:20px;font-size:12px"><span style="position:absolute;left:4px;top:0px;line-height:20px;white-space:nowrap">胜平负均值</span><span class="tri" style="right:6px;top:6px;border-left-width:3px;border-right-width:3px;border-top-width:6px"></span></div>
<div class="sel" style="left:717px;top:432px;width:36px;height:20px;font-size:12px"><span style="position:absolute;left:4px;top:0px;line-height:20px;white-space:nowrap">终</span><span class="tri" style="right:6px;top:6px;border-left-width:3px;border-right-width:3px;border-top-width:6px"></span></div>
<div class="sel" style="left:820px;top:432px;width:48px;height:20px;font-size:12px"><span style="position:absolute;left:4px;top:0px;line-height:20px;white-space:nowrap">全场</span><span class="tri" style="right:6px;top:6px;border-left-width:3px;border-right-width:3px;border-top-width:6px"></span></div>
<div style="left:0px;top:471px;width:908px;height:28px;background:#fff"></div>
<div style="left:453px;top:471px;width:145px;height:28px;background:#fdf9f6"></div>
<div style="left:598px;top:471px;width:181px;height:28px;background:#eff7fc"></div>
<div style="left:1px;top:472px;width:52px;height:27px;background:#fe5000"></div>
<div style="left:1px;top:472px;width:52px;height:27px;line-height:27px;text-align:center;white-space:nowrap;font-size:13px;color:#fff"><i>欧冠杯</i></div>
<div style="left:54px;top:472px;width:72px;height:27px;line-height:27px;text-align:center;white-space:nowrap;font-size:13px;color:#222">26-01-29</div>
<div style="left:127px;top:472px;width:100px;height:27px;line-height:27px;text-align:center;white-space:nowrap;font-size:13px;color:#000"><i>圣吉罗斯</i>(<i>中</i>)</div>
<div style="left:228px;top:472px;width:83px;height:27px;line-height:27px;text-align:center;white-space:nowrap;font-size:13px;color:#222"><span style="color:#ff0000">1-0</span>(0-0)</div>
<div style="left:312px;top:472px;width:37px;height:27px;line-height:27px;text-align:center;white-space:nowrap;font-size:13px;color:#222">0-6</div>
<div style="left:350px;top:472px;width:103px;height:27px;line-height:27px;text-align:center;white-space:nowrap;font-size:13px;color:#007200"><i>亚特兰大</i></div>
<div style="left:454px;top:472px;width:38px;height:27px;line-height:27px;text-align:center;white-space:nowrap;font-size:13px;color:#222">0.80</div>
<div style="left:493px;top:472px;width:64px;height:27px;line-height:27px;text-align:center;white-space:nowrap;font-size:13px;color:#111"><span class="ast">*</span><i>平</i><span class="sl">/</span><i>半</i></div>
<div style="left:558px;top:472px;width:40px;height:27px;line-height:27px;text-align:center;white-space:nowrap;font-size:13px;color:#222">1.08</div>
<div style="left:599px;top:472px;width:58px;height:27px;line-height:27px;text-align:center;white-space:nowrap;font-size:13px;color:#222">3.18</div>
<div style="left:658px;top:472px;width:60px;height:27px;line-height:27px;text-align:center;white-space:nowrap;font-size:13px;color:#222">3.57</div>
<div style="left:719px;top:472px;width:60px;height:27px;line-height:27px;text-align:center;white-space:nowrap;font-size:13px;color:#222">2.20</div>
<div style="left:780px;top:472px;width:36px;height:27px;line-height:27px;text-align:center;white-space:nowrap;font-size:13px;color:#007200"><i>负</i></div>
<div style="left:817px;top:472px;width:36px;height:27px;line-height:27px;text-align:center;white-space:nowrap;font-size:13px;color:#007200"><i>输</i></div>
<div style="left:854px;top:472px;width:54px;height:27px;line-height:27px;text-align:center;white-space:nowrap;font-size:13px;color:#007200"><i>小</i></div>
<div style="left:0px;top:499px;width:908px;height:28px;background:#efefef"></div>
<div style="left:453px;top:499px;width:145px;height:28px;background:#fdf9f6"></div>
<div style="left:598px;top:499px;width:181px;height:28px;background:#eff7fc"></div>
<div style="left:1px;top:500px;width:52px;height:27px;background:#0787ff"></div>
<div style="left:1px;top:500px;width:52px;height:27px;line-height:27px;text-align:center;white-space:nowrap;font-size:13px;color:#fff"><i>意甲</i></div>
<div style="left:54px;top:500px;width:72px;height:27px;line-height:27px;text-align:center;white-space:nowrap;font-size:13px;color:#222">26-01-25</div>
<div style="left:127px;top:500px;width:100px;height:27px;line-height:27px;text-align:center;white-space:nowrap;font-size:13px;color:#007200"><i>亚特兰大</i></div>
<div style="left:228px;top:500px;width:83px;height:27px;line-height:27px;text-align:center;white-space:nowrap;font-size:13px;color:#222"><span style="color:#ff0000">4-0</span>(2-0)</div>
<div style="left:312px;top:500px;width:37px;height:27px;line-height:27px;text-align:center;white-space:nowrap;font-size:13px;color:#222">6-9</div>
<div style="left:350px;top:500px;width:103px;height:27px;line-height:27px;text-align:center;white-space:nowrap;font-size:13px;color:#000"><i>帕尔马</i></div>
<div style="left:454px;top:500px;width:38px;height:27px;line-height:27px;text-align:center;white-space:nowrap;font-size:13px;color:#222">0.83</div>
<div style="left:493px;top:500px;width:64px;height:27px;line-height:27px;text-align:center;white-space:nowrap;font-size:13px;color:#111"><i>一</i><span class="sl">/</span><i>球半</i></div>
<div style="left:558px;top:500px;width:40px;height:27px;line-height:27px;text-align:center;white-space:nowrap;font-size:13px;color:#222">1.05</div>
<div style="left:599px;top:500px;width:58px;height:27px;line-height:27px;text-align:center;white-space:nowrap;font-size:13px;color:#222">1.35</div>
<div style="left:658px;top:500px;width:60px;height:27px;line-height:27px;text-align:center;white-space:nowrap;font-size:13px;color:#222">5.00</div>
<div style="left:719px;top:500px;width:60px;height:27px;line-height:27px;text-align:center;white-space:nowrap;font-size:13px;color:#222">9.00</div>
<div style="left:780px;top:500px;width:36px;height:27px;line-height:27px;text-align:center;white-space:nowrap;font-size:13px;color:#ff0000"><i>胜</i></div>
<div style="left:817px;top:500px;width:36px;height:27px;line-height:27px;text-align:center;white-space:nowrap;font-size:13px;color:#ff0000"><i>赢</i></div>
<div style="left:854px;top:500px;width:54px;height:27px;line-height:27px;text-align:center;white-space:nowrap;font-size:13px;color:#ff0000"><i>大</i></div>
<div style="left:0px;top:527px;width:908px;height:28px;background:#fff"></div>
<div style="left:453px;top:527px;width:145px;height:28px;background:#fdf9f6"></div>
<div style="left:598px;top:527px;width:181px;height:28px;background:#eff7fc"></div>
<div style="left:1px;top:528px;width:52px;height:27px;background:#fe5000"></div>
<div style="left:1px;top:528px;width:52px;height:27px;line-height:27px;text-align:center;white-space:nowrap;font-size:13px;color:#fff"><i>欧冠杯</i></div>
<div style="left:54px;top:528px;width:72px;height:27px;line-height:27px;text-align:center;white-space:nowrap;font-size:13px;color:#222">26-01-22</div>
<div style="left:127px;top:528px;width:100px;height:27px;line-height:27px;text-align:center;white-space:nowrap;font-size:13px;color:#007200"><i>亚特兰大</i></div>
<div style="left:228px;top:528px;width:83px;height:27px;line-height:27px;text-align:center;white-space:nowrap;font-size:13px;color:#222"><span style="color:#ff0000">2-3</span>(1-0)</div>
<div style="left:312px;top:528px;width:37px;height:27px;line-height:27px;text-align:center;white-space:nowrap;font-size:13px;color:#222">5-2</div>
<div style="left:350px;top:528px;width:103px;height:27px;line-height:27px;text-align:center;white-space:nowrap;font-size:13px;color:#000"><i>毕尔巴鄂竞技</i></div>
<div style="left:454px;top:528px;width:38px;height:27px;line-height:27px;text-align:center;white-space:nowrap;font-size:13px;color:#222">0.90</div>
<div style="left:493px;top:528px;width:64px;height:27px;line-height:27px;text-align:center;white-space:nowrap;font-size:13px;color:#111"><i>半</i><span class="sl">/</span><i>一</i></div>
<div style="left:558px;top:528px;width:40px;height:27px;line-height:27px;text-align:center;white-space:nowrap;font-size:13px;color:#222">0.98</div>
<div style="left:599px;top:528px;width:58px;height:27px;line-height:27px;text-align:center;white-space:nowrap;font-size:13px;color:#222">1.69</div>
<div style="left:658px;top:528px;width:60px;height:27px;line-height:27px;text-align:center;white-space:nowrap;font-size:13px;color:#222">3.72</div>
<div style="left:719px;top:528px;width:60px;height:27px;line-height:27px;text-align:center;white-space:nowrap;font-size:13px;color:#222">5.25</div>
<div style="left:780px;top:528px;width:36px;height:27px;line-height:27px;text-align:center;white-space:nowrap;font-size:13px;color:#007200"><i>负</i></div>
<div style="left:817px;top:528px;width:36px;height:27px;line-height:27px;text-align:center;white-space:nowrap;font-size:13px;color:#007200"><i>输</i></div>
<div style="left:854px;top:528px;width:54px;height:27px;line-height:27px;text-align:center;white-space:nowrap;font-size:13px;color:#ff0000"><i>大</i></div>
<div style="left:0px;top:555px;width:908px;height:28px;background:#efefef"></div>
<div style="left:453px;top:555px;width:145px;height:28px;background:#fdf9f6"></div>
<div style="left:598px;top:555px;width:181px;height:28px;background:#eff7fc"></div>
<div style="left:1px;top:556px;width:52px;height:27px;background:#0787ff"></div>
<div style="left:1px;top:556px;width:52px;height:27px;line-height:27px;text-align:center;white-space:nowrap;font-size:13px;color:#fff"><i>意甲</i></div>
<div style="left:54px;top:556px;width:72px;height:27px;line-height:27px;text-align:center;white-space:nowrap;font-size:13px;color:#222">26-01-17</div>
<div style="left:127px;top:556px;width:100px;height:27px;line-height:27px;text-align:center;white-space:nowrap;font-size:13px;color:#000"><i>比萨</i></div>
<div style="left:228px;top:556px;width:83px;height:27px;line-height:27px;text-align:center;white-space:nowrap;font-size:13px;color:#222"><span style="color:#ff0000">1-1</span>(0-0)</div>
<div style="left:312px;top:556px;width:37px;height:27px;line-height:27px;text-align:center;white-space:nowrap;font-size:13px;color:#222">10-1</div>
<div style="left:350px;top:556px;width:103px;height:27px;line-height:27px;text-align:center;white-space:nowrap;font-size:13px;color:#007200"><i>亚特兰大</i></div>
<div style="left:454px;top:556px;width:38px;height:27px;line-height:27px;text-align:center;white-space:nowrap;font-size:13px;color:#222">0.91</div>
<div style="left:493px;top:556px;width:64px;height:27px;line-height:27px;text-align:center;white-space:nowrap;font-size:13px;color:#111"><span class="ast">*</span><i>一球</i></div>
<div style="left:558px;top:556px;width:40px;height:27px;line-height:27px;text-align:center;white-space:nowrap;font-size:13px;color:#222">0.97</div>
<div style="left:599px;top:556px;width:58px;height:27px;line-height:27px;text-align:center;white-space:nowrap;font-size:13px;color:#222">6.22</div>
<div style="left:658px;top:556px;width:60px;height:27px;line-height:27px;text-align:center;white-space:nowrap;font-size:13px;color:#222">4.08</div>
<div style="left:719px;top:556px;width:60px;height:27px;line-height:27px;text-align:center;white-space:nowrap;font-size:13px;color:#222">1.55</div>
<div style="left:780px;top:556px;width:36px;height:27px;line-height:27px;text-align:center;white-space:nowrap;font-size:13px;color:#0000ff"><i>平</i></div>
<div style="left:817px;top:556px;width:36px;height:27px;line-height:27px;text-align:center;white-space:nowrap;font-size:13px;color:#007200"><i>输</i></div>
<div style="left:854px;top:556px;width:54px;height:27px;line-height:27px;text-align:center;white-space:nowrap;font-size:13px;color:#007200"><i>小</i></div>
<div style="left:0px;top:583px;width:908px;height:28px;background:#fff"></div>
<div style="left:453px;top:583px;width:145px;height:28px;background:#fdf9f6"></div>
<div style="left:598px;top:583px;width:181px;height:28px;background:#eff7fc"></div>
<div style="left:1px;top:584px;width:52px;height:27px;background:#0787ff"></div>
<div style="left:1px;top:584px;width:52px;height:27px;line-height:27px;text-align:center;white-space:nowrap;font-size:13px;color:#fff"><i>意甲</i></div>
<div style="left:54px;top:584px;width:72px;height:27px;line-height:27px;text-align:center;white-space:nowrap;font-size:13px;color:#222">26-01-11</div>
<div style="left:127px;top:584px;width:100px;height:27px;line-height:27px;text-align:center;white-space:nowrap;font-size:13px;color:#007200"><i>亚特兰大</i></div>
<div style="left:228px;top:584px;width:83px;height:27px;line-height:27px;text-align:center;white-space:nowrap;font-size:13px;color:#222"><span style="color:#ff0000">2-0</span>(1-0)</div>
<div style="left:312px;top:584px;width:37px;height:27px;line-height:27px;text-align:center;white-space:nowrap;font-size:13px;color:#222">5-4</div>
<div style="left:350px;top:584px;width:103px;height:27px;line-height:27px;text-align:center;white-space:nowrap;font-size:13px;color:#000"><i>都灵</i></div>
<div style="left:454px;top:584px;width:38px;height:27px;line-height:27px;text-align:center;white-space:nowrap;font-size:13px;color:#222">1.08</div>
<div style="left:493px;top:584px;width:64px;height:27px;line-height:27px;text-align:center;white-space:nowrap;font-size:13px;color:#111"><i>一球</i></div>
<div style="left:558px;top:584px;width:40px;height:27px;line-height:27px;text-align:center;white-space:nowrap;font-size:13px;color:#222">0.80</div>
<div style="left:599px;top:584px;width:58px;height:27px;line-height:27px;text-align:center;white-space:nowrap;font-size:13px;color:#222">1.59</div>
<div style="left:658px;top:584px;width:60px;height:27px;line-height:27px;text-align:center;white-space:nowrap;font-size:13px;color:#222">3.80</div>
<div style="left:719px;top:584px;width:60px;height:27px;line-height:27px;text-align:center;white-space:nowrap;font-size:13px;color:#222">6.26</div>
<div style="left:780px;top:584px;width:36px;height:27px;line-height:27px;text-align:center;white-space:nowrap;font-size:13px;color:#ff0000"><i>胜</i></div>
<div style="left:817px;top:584px;width:36px;height:27px;line-height:27px;text-align:center;white-space:nowrap;font-size:13px;color:#ff0000"><i>赢</i></div>
<div style="left:854px;top:584px;width:54px;height:27px;line-height:27px;text-align:center;white-space:nowrap;font-size:13px;color:#007200"><i>小</i></div>
<div style="left:0px;top:611px;width:908px;height:28px;background:#efefef"></div>
<div style="left:453px;top:611px;width:145px;height:28px;background:#fdf9f6"></div>
<div style="left:598px;top:611px;width:181px;height:28px;background:#eff7fc"></div>
<div style="left:1px;top:612px;width:52px;height:27px;background:#0787ff"></div>
<div style="left:1px;top:612px;width:52px;height:27px;line-height:27px;text-align:center;white-space:nowrap;font-size:13px;color:#fff"><i>意甲</i></div>
<div style="left:54px;top:612px;width:72px;height:27px;line-height:27px;text-align:center;white-space:nowrap;font-size:13px;color:#222">26-01-08</div>
<div style="left:127px;top:612px;width:100px;height:27px;line-height:27px;text-align:center;white-space:nowrap;font-size:13px;color:#000"><i>博洛尼亚</i></div>
<div style="left:228px;top:612px;width:83px;height:27px;line-height:27px;text-align:center;white-space:nowrap;font-size:13px;color:#222"><span style="color:#ff0000">0-2</span>(0-1)</div>
<div style="left:312px;top:612px;width:37px;height:27px;line-height:27px;text-align:center;white-space:nowrap;font-size:13px;color:#222">6-6</div>
<div style="left:350px;top:612px;width:103px;height:27px;line-height:27px;text-align:center;white-space:nowrap;font-size:13px;color:#007200"><i>亚特兰大</i></div>
<div style="left:454px;top:612px;width:38px;height:27px;line-height:27px;text-align:center;white-space:nowrap;font-size:13px;color:#222">0.80</div>
<div style="left:493px;top:612px;width:64px;height:27px;line-height:27px;text-align:center;white-space:nowrap;font-size:13px;color:#111"><span class="ast">*</span><i>平</i><span class="sl">/</span><i>半</i></div>
<div style="left:558px;top:612px;width:40px;height:27px;line-height:27px;text-align:center;white-space:nowrap;font-size:13px;color:#222">1.08</div>
<div style="left:599px;top:612px;width:58px;height:27px;line-height:27px;text-align:center;white-space:nowrap;font-size:13px;color:#222">3.06</div>
<div style="left:658px;top:612px;width:60px;height:27px;line-height:27px;text-align:center;white-space:nowrap;font-size:13px;color:#222">3.25</div>
<div style="left:719px;top:612px;width:60px;height:27px;line-height:27px;text-align:center;white-space:nowrap;font-size:13px;color:#222">2.40</div>
<div style="left:780px;top:612px;width:36px;height:27px;line-height:27px;text-align:center;white-space:nowrap;font-size:13px;color:#ff0000"><i>胜</i></div>
<div style="left:817px;top:612px;width:36px;height:27px;line-height:27px;text-align:center;white-space:nowrap;font-size:13px;color:#ff0000"><i>赢</i></div>
<div style="left:854px;top:612px;width:54px;height:27px;line-height:27px;text-align:center;white-space:nowrap;font-size:13px;color:#007200"><i>小</i></div>
<div style="left:0px;top:639px;width:908px;height:28px;background:#fff"></div>
<div style="left:453px;top:639px;width:145px;height:28px;background:#fdf9f6"></div>
<div style="left:598px;top:639px;width:181px;height:28px;background:#eff7fc"></div>
<div style="left:1px;top:640px;width:52px;height:27px;background:#0787ff"></div>
<div style="left:1px;top:640px;width:52px;height:27px;line-height:27px;text-align:center;white-space:nowrap;font-size:13px;color:#fff"><i>意甲</i></div>
<div style="left:54px;top:640px;width:72px;height:27px;line-height:27px;text-align:center;white-space:nowrap;font-size:13px;color:#222">26-01-04</div>
<div style="left:127px;top:640px;width:100px;height:27px;line-height:27px;text-align:center;white-space:nowrap;font-size:13px;color:#007200"><i>亚特兰大</i></div>
<div style="left:228px;top:640px;width:83px;height:27px;line-height:27px;text-align:center;white-space:nowrap;font-size:13px;color:#222"><span style="color:#ff0000">1-0</span>(1-0)</div>
<div style="left:312px;top:640px;width:37px;height:27px;line-height:27px;text-align:center;white-space:nowrap;font-size:13px;color:#222">7-5</div>
<div style="left:350px;top:640px;width:103px;height:27px;line-height:27px;text-align:center;white-space:nowrap;font-size:13px;color:#000"><i>罗马</i></div>
<div style="left:454px;top:640px;width:38px;height:27px;line-height:27px;text-align:center;white-space:nowrap;font-size:13px;color:#222">0.97</div>
<div style="left:493px;top:640px;width:64px;height:27px;line-height:27px;text-align:center;white-space:nowrap;font-size:13px;color:#111"><i>平</i><span class="sl">/</span><i>半</i></div>
<div style="left:558px;top:640px;width:40px;height:27px;line-height:27px;text-align:center;white-space:nowrap;font-size:13px;color:#222">0.91</div>
<div style="left:599px;top:640px;width:58px;height:27px;line-height:27px;text-align:center;white-space:nowrap;font-size:13px;color:#222">2.30</div>
<div style="left:658px;top:640px;width:60px;height:27px;line-height:27px;text-align:center;white-space:nowrap;font-size:13px;color:#222">3.07</div>
<div style="left:719px;top:640px;width:60px;height:27px;line-height:27px;text-align:center;white-space:nowrap;font-size:13px;color:#222">3.43</div>
<div style="left:780px;top:640px;width:36px;height:27px;line-height:27px;text-align:center;white-space:nowrap;font-size:13px;color:#ff0000"><i>胜</i></div>
<div style="left:817px;top:640px;width:36px;height:27px;line-height:27px;text-align:center;white-space:nowrap;font-size:13px;color:#ff0000"><i>赢</i></div>
<div style="left:854px;top:640px;width:54px;height:27px;line-height:27px;text-align:center;white-space:nowrap;font-size:13px;color:#007200"><i>小</i></div>
<div style="left:0px;top:667px;width:908px;height:28px;background:#efefef"></div>
<div style="left:453px;top:667px;width:145px;height:28px;background:#fdf9f6"></div>
<div style="left:598px;top:667px;width:181px;height:28px;background:#eff7fc"></div>
<div style="left:1px;top:668px;width:52px;height:27px;background:#0787ff"></div>
<div style="left:1px;top:668px;width:52px;height:27px;line-height:27px;text-align:center;white-space:nowrap;font-size:13px;color:#fff"><i>意甲</i></div>
<div style="left:54px;top:668px;width:72px;height:27px;line-height:27px;text-align:center;white-space:nowrap;font-size:13px;color:#222">25-12-29</div>
<div style="left:127px;top:668px;width:100px;height:27px;line-height:27px;text-align:center;white-space:nowrap;font-size:13px;color:#007200"><i>亚特兰大</i></div>
<div style="left:228px;top:668px;width:83px;height:27px;line-height:27px;text-align:center;white-space:nowrap;font-size:13px;color:#222"><span style="color:#ff0000">0-1</span>(0-0)</div>
<div style="left:312px;top:668px;width:37px;height:27px;line-height:27px;text-align:center;white-space:nowrap;font-size:13px;color:#222">4-7</div>
<div style="left:350px;top:668px;width:103px;height:27px;line-height:27px;text-align:center;white-space:nowrap;font-size:13px;color:#000"><i>国际米兰</i></div>
<div style="left:454px;top:668px;width:38px;height:27px;line-height:27px;text-align:center;white-space:nowrap;font-size:13px;color:#222">1.03</div>
<div style="left:493px;top:668px;width:64px;height:27px;line-height:27px;text-align:center;white-space:nowrap;font-size:13px;color:#111"><span class="ast">*</span><i>平</i><span class="sl">/</span><i>半</i></div>
<div style="left:558px;top:668px;width:40px;height:27px;line-height:27px;text-align:center;white-space:nowrap;font-size:13px;color:#222">0.85</div>
<div style="left:599px;top:668px;width:58px;height:27px;line-height:27px;text-align:center;white-space:nowrap;font-size:13px;color:#222">3.51</div>
<div style="left:658px;top:668px;width:60px;height:27px;line-height:27px;text-align:center;white-space:nowrap;font-size:13px;color:#222">3.54</div>
<div style="left:719px;top:668px;width:60px;height:27px;line-height:27px;text-align:center;white-space:nowrap;font-size:13px;color:#222">2.07</div>
<div style="left:780px;top:668px;width:36px;height:27px;line-height:27px;text-align:center;white-space:nowrap;font-size:13px;color:#007200"><i>负</i></div>
<div style="left:817px;top:668px;width:36px;height:27px;line-height:27px;text-align:center;white-space:nowrap;font-size:13px;color:#007200"><i>输</i></div>
<div style="left:854px;top:668px;width:54px;height:27px;line-height:27px;text-align:center;white-space:nowrap;font-size:13px;color:#007200"><i>小</i></div>
<div style="left:0px;top:695px;width:908px;height:28px;background:#fff"></div>
<div style="left:453px;top:695px;width:145px;height:28px;background:#fdf9f6"></div>
<div style="left:598px;top:695px;width:181px;height:28px;background:#eff7fc"></div>
<div style="left:1px;top:696px;width:52px;height:27px;background:#0787ff"></div>
<div style="left:1px;top:696px;width:52px;height:27px;line-height:27px;text-align:center;white-space:nowrap;font-size:13px;color:#fff"><i>意甲</i></div>
<div style="left:54px;top:696px;width:72px;height:27px;line-height:27px;text-align:center;white-space:nowrap;font-size:13px;color:#222">25-12-22</div>
<div style="left:127px;top:696px;width:100px;height:27px;line-height:27px;text-align:center;white-space:nowrap;font-size:13px;color:#000"><span class="badge">1</span><i>热那亚</i></div>
<div style="left:228px;top:696px;width:83px;height:27px;line-height:27px;text-align:center;white-space:nowrap;font-size:13px;color:#222"><span style="color:#ff0000">0-1</span>(0-0)</div>
<div style="left:312px;top:696px;width:37px;height:27px;line-height:27px;text-align:center;white-space:nowrap;font-size:13px;color:#222">6-10</div>
<div style="left:350px;top:696px;width:103px;height:27px;line-height:27px;text-align:center;white-space:nowrap;font-size:13px;color:#007200"><i>亚特兰大</i></div>
<div style="left:454px;top:696px;width:38px;height:27px;line-height:27px;text-align:center;white-space:nowrap;font-size:13px;color:#222">1.08</div>
<div style="left:493px;top:696px;width:64px;height:27px;line-height:27px;text-align:center;white-space:nowrap;font-size:13px;color:#111"><span class="ast">*</span><i>平</i><span class="sl">/</span><i>半</i></div>
<div style="left:558px;top:696px;width:40px;height:27px;line-height:27px;text-align:center;white-space:nowrap;font-size:13px;color:#222">0.80</div>
<div style="left:599px;top:696px;width:58px;height:27px;line-height:27px;text-align:center;white-space:nowrap;font-size:13px;color:#222">3.86</div>
<div style="left:658px;top:696px;width:60px;height:27px;line-height:27px;text-align:center;white-space:nowrap;font-size:13px;color:#222">3.23</div>
<div style="left:719px;top:696px;width:60px;height:27px;line-height:27px;text-align:center;white-space:nowrap;font-size:13px;color:#222">2.07</div>
<div style="left:780px;top:696px;width:36px;height:27px;line-height:27px;text-align:center;white-space:nowrap;font-size:13px;color:#ff0000"><i>胜</i></div>
<div style="left:817px;top:696px;width:36px;height:27px;line-height:27px;text-align:center;white-space:nowrap;font-size:13px;color:#ff0000"><i>赢</i></div>
<div style="left:854px;top:696px;width:54px;height:27px;line-height:27px;text-align:center;white-space:nowrap;font-size:13px;color:#007200"><i>小</i></div>
<div style="left:0px;top:723px;width:908px;height:28px;background:#efefef"></div>
<div style="left:453px;top:723px;width:145px;height:28px;background:#fdf9f6"></div>
<div style="left:598px;top:723px;width:181px;height:28px;background:#eff7fc"></div>
<div style="left:1px;top:724px;width:52px;height:27px;background:#0787ff"></div>
<div style="left:1px;top:724px;width:52px;height:27px;line-height:27px;text-align:center;white-space:nowrap;font-size:13px;color:#fff"><i>意甲</i></div>
<div style="left:54px;top:724px;width:72px;height:27px;line-height:27px;text-align:center;white-space:nowrap;font-size:13px;color:#222">25-12-14</div>
<div style="left:127px;top:724px;width:100px;height:27px;line-height:27px;text-align:center;white-space:nowrap;font-size:13px;color:#007200"><i>亚特兰大</i></div>
<div style="left:228px;top:724px;width:83px;height:27px;line-height:27px;text-align:center;white-space:nowrap;font-size:13px;color:#222"><span style="color:#ff0000">2-1</span>(1-0)</div>
<div style="left:312px;top:724px;width:37px;height:27px;line-height:27px;text-align:center;white-space:nowrap;font-size:13px;color:#222">5-4</div>
<div style="left:350px;top:724px;width:103px;height:27px;line-height:27px;text-align:center;white-space:nowrap;font-size:13px;color:#000"><i>卡利亚里</i></div>
<div style="left:454px;top:724px;width:38px;height:27px;line-height:27px;text-align:center;white-space:nowrap;font-size:13px;color:#222">1.04</div>
<div style="left:493px;top:724px;width:64px;height:27px;line-height:27px;text-align:center;white-space:nowrap;font-size:13px;color:#111"><i>球半</i></div>
<div style="left:558px;top:724px;width:40px;height:27px;line-height:27px;text-align:center;white-space:nowrap;font-size:13px;color:#222">0.84</div>
<div style="left:599px;top:724px;width:58px;height:27px;line-height:27px;text-align:center;white-space:nowrap;font-size:13px;color:#222">1.34</div>
<div style="left:658px;top:724px;width:60px;height:27px;line-height:27px;text-align:center;white-space:nowrap;font-size:13px;color:#222">5.14</div>
<div style="left:719px;top:724px;width:60px;height:27px;line-height:27px;text-align:center;white-space:nowrap;font-size:13px;color:#222">9.03</div>
<div style="left:780px;top:724px;width:36px;height:27px;line-height:27px;text-align:center;white-space:nowrap;font-size:13px;color:#ff0000"><i>胜</i></div>
<div style="left:817px;top:724px;width:36px;height:27px;line-height:27px;text-align:center;white-space:nowrap;font-size:13px;color:#007200"><i>输</i></div>
<div style="left:854px;top:724px;width:54px;height:27px;line-height:27px;text-align:center;white-space:nowrap;font-size:13px;color:#ff0000"><i>大</i></div>
<div style="left:0px;top:430px;width:908px;height:1px;background:#bebebe"></div>
<div style="left:453px;top:453px;width:455px;height:1px;background:#bebebe"></div>
<div style="left:0px;top:471px;width:908px;height:1px;background:#bebebe"></div>
<div style="left:0px;top:499px;width:908px;height:1px;background:#bebebe"></div>
<div style="left:0px;top:527px;width:908px;height:1px;background:#bebebe"></div>
<div style="left:0px;top:555px;width:908px;height:1px;background:#bebebe"></div>
<div style="left:0px;top:583px;width:908px;height:1px;background:#bebebe"></div>
<div style="left:0px;top:611px;width:908px;height:1px;background:#bebebe"></div>
<div style="left:0px;top:639px;width:908px;height:1px;background:#bebebe"></div>
<div style="left:0px;top:667px;width:908px;height:1px;background:#bebebe"></div>
<div style="left:0px;top:695px;width:908px;height:1px;background:#bebebe"></div>
<div style="left:0px;top:723px;width:908px;height:1px;background:#bebebe"></div>
<div style="left:0px;top:751px;width:908px;height:1px;background:#bebebe"></div>
<div style="left:0px;top:430px;width:1px;height:321px;background:#bebebe"></div>
<div style="left:53px;top:430px;width:1px;height:321px;background:#bebebe"></div>
<div style="left:126px;top:430px;width:1px;height:321px;background:#bebebe"></div>
<div style="left:227px;top:430px;width:1px;height:321px;background:#bebebe"></div>
<div style="left:311px;top:430px;width:1px;height:321px;background:#bebebe"></div>
<div style="left:349px;top:430px;width:1px;height:321px;background:#bebebe"></div>
<div style="left:453px;top:430px;width:1px;height:321px;background:#bebebe"></div>
<div style="left:492px;top:453px;width:1px;height:298px;background:#bebebe"></div>
<div style="left:557px;top:453px;width:1px;height:298px;background:#bebebe"></div>
<div style="left:598px;top:430px;width:1px;height:321px;background:#bebebe"></div>
<div style="left:657px;top:453px;width:1px;height:298px;background:#bebebe"></div>
<div style="left:718px;top:453px;width:1px;height:298px;background:#bebebe"></div>
<div style="left:779px;top:430px;width:1px;height:321px;background:#bebebe"></div>
<div style="left:816px;top:453px;width:1px;height:298px;background:#bebebe"></div>
<div style="left:853px;top:453px;width:1px;height:298px;background:#bebebe"></div>
</body></html>
